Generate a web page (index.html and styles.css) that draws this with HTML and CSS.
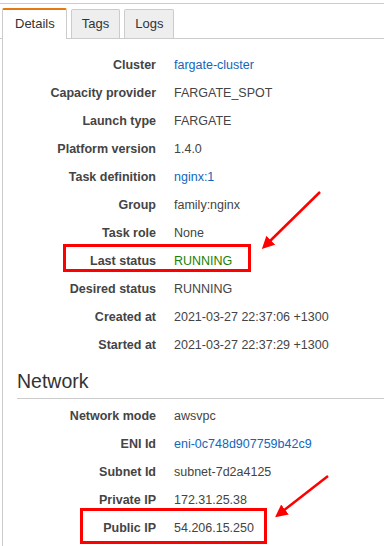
FILE: index.html
```html
<!DOCTYPE html>
<html lang="en">
<head>
    <meta charset="UTF-8">
    <meta name="viewport" content="width=device-width, initial-scale=1.0">
    <title>Task details</title>
    <link rel="stylesheet" href="styles.css">
</head>
<body>
    <div class="page">
        <div class="tabs">
            <div class="tab active">Details</div>
            <div class="tab">Tags</div>
            <div class="tab">Logs</div>
        </div>
        <div class="panel">
            <div class="details">
                <div class="label">Cluster</div><div class="value"><a href="#">fargate-cluster</a></div>
                <div class="label">Capacity provider</div><div class="value">FARGATE_SPOT</div>
                <div class="label">Launch type</div><div class="value">FARGATE</div>
                <div class="label">Platform version</div><div class="value">1.4.0</div>
                <div class="label">Task definition</div><div class="value"><a href="#">nginx:1</a></div>
                <div class="label">Group</div><div class="value">family:nginx</div>
                <div class="label">Task role</div><div class="value">None</div>
                <div class="label">Last status</div><div class="value running">RUNNING</div>
                <div class="label">Desired status</div><div class="value">RUNNING</div>
                <div class="label">Created at</div><div class="value">2021-03-27 22:37:06 +1300</div>
                <div class="label">Started at</div><div class="value">2021-03-27 22:37:29 +1300</div>
            </div>

            <h2>Network</h2>
            <div class="details network">
                <div class="label">Network mode</div><div class="value">awsvpc</div>
                <div class="label">ENI Id</div><div class="value"><a href="#">eni-0c748d907759b42c9</a></div>
                <div class="label">Subnet Id</div><div class="value">subnet-7d2a4125</div>
                <div class="label">Private IP</div><div class="value">172.31.25.38</div>
                <div class="label">Public IP</div><div class="value">54.206.15.250</div>
            </div>
        </div>
    </div>

    <!-- annotations drawn over the screenshot -->
    <svg class="marks" width="384" height="546" viewBox="0 0 384 546">
        <defs>
            <marker id="head" markerWidth="5" markerHeight="5" refX="1" refY="2.5" orient="auto" markerUnits="strokeWidth">
                <path d="M0,0 L5,2.5 L0,5 Z" fill="#f00"/>
            </marker>
        </defs>
        <rect x="64.5" y="245.5" width="185" height="25" fill="none" stroke="#f00" stroke-width="3"/>
        <rect x="81.5" y="509.5" width="184" height="33" fill="none" stroke="#f00" stroke-width="3"/>
        <line x1="320" y1="192" x2="269" y2="242" stroke="#f00" stroke-width="2.5" marker-end="url(#head)"/>
        <line x1="328" y1="476" x2="283" y2="511" stroke="#f00" stroke-width="2.5" marker-end="url(#head)"/>
    </svg>
</body>
</html>
```

FILE: styles.css
```css
body {
    margin: 0;
    font-family: "Liberation Sans", Arial, sans-serif;
    color: #444;
    background-color: white;
}
.page {
    margin-top: 3px;
    border-top: 1px solid #ccc;
    height: 542px;
    display: flex;
    flex-direction: column;
}
.tabs {
    display: flex;
    align-items: flex-end;
    gap: 4px;
    margin-top: 4px;
    padding-left: 2px;
    border-bottom: 1px solid #ccc;
}
.tab {
    height: 28px;
    line-height: 28px;
    padding: 0 10px;
    font-size: 13px;
    color: #333;
    background-color: #eee;
    border: 1px solid #ccc;
    border-bottom: none;
    border-radius: 2px 2px 0 0;
}
.tab.active {
    background-color: white;
    border-top: 2px solid #e47911;
    height: 28px;
    line-height: 27px;
    padding: 0 11px 0 12px;
    margin-bottom: -1px;
    padding-bottom: 1px;
    color: #333;
}
.panel {
    flex: 1;
    margin-left: 2px;
    border-left: 1px solid #ccc;
    padding-top: 12px;
}
.details {
    display: grid;
    grid-template-columns: 153px 1fr;
    column-gap: 18px;
    font-size: 12.5px;
    line-height: 28px;
}
.label {
    text-align: right;
    font-weight: bold;
    color: #444;
}
.value {
    color: #444;
    white-space: nowrap;
}
.value a {
    color: #1166bb;
    text-decoration: none;
}
.value.running {
    color: #1d8102;
}
h2 {
    margin: 10px 0 0 14px;
    padding-bottom: 5px;
    border-bottom: 1px solid #ccc;
    font-size: 19.5px;
    font-weight: normal;
    line-height: 24px;
    color: #333;
}
.network {
    padding-top: 3px;
}
.marks {
    position: absolute;
    top: 0;
    left: 0;
    pointer-events: none;
}
```
